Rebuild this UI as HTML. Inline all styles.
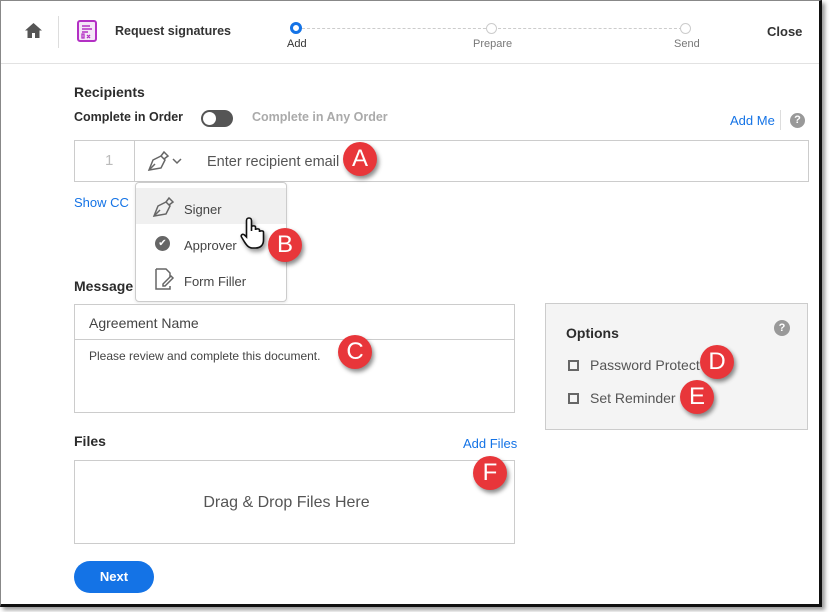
<!DOCTYPE html>
<html><head><style>
*{box-sizing:border-box;margin:0;padding:0}
body{width:830px;height:612px;background:#fff;font-family:"Liberation Sans",sans-serif;position:relative;overflow:hidden;color:#2c2c2c}
.frame{position:absolute;left:0;top:0;width:822px;height:607px;border:1px solid #888;border-right:3px solid #111;border-bottom:3px solid #111;box-shadow:3px 3px 4px #999;background:#fff}
.a{position:absolute}
.b{font-weight:bold}
.badge{position:absolute;width:34px;height:34px;border-radius:50%;background:#e8363a;color:#fff;font-size:24px;text-align:center;line-height:34px;box-shadow:2px 3px 4px rgba(0,0,0,.45)}
.link{color:#1473e6;font-size:13px}
.cb{position:absolute;width:11px;height:11px;border:2px solid #666}
</style></head><body>
<div class="frame"></div>
<svg class="a" style="left:25px;top:23px" width="17" height="15" viewBox="0 0 17 15"><path d="M8.5 0L0 7.5h2.5V15h4.5v-5h3v5h4.5V7.5H17z" fill="#555"/></svg>
<div class="a" style="left:58px;top:16px;width:1px;height:32px;background:#ddd"></div>
<svg class="a" style="left:77px;top:20px" width="20" height="22" viewBox="0 0 20 22"><rect x="1" y="1" width="18" height="20" rx="2" fill="#f4e6f7" stroke="#b330c4" stroke-width="2"/><path d="M5 6h8M5 9h10M5 12h6" stroke="#b330c4" stroke-width="1.5"/><path d="M5 14h2v4H5zM10 15l3 3M13 15l-3 3" stroke="#b330c4" stroke-width="1.3" fill="none"/></svg>
<div class="a b" style="left:115px;top:24px;font-size:12.5px;color:#333">Request signatures</div>
<div class="a" style="left:297px;top:28px;width:390px;border-top:1px dashed #ccc"></div>
<div class="a" style="left:290px;top:22px;width:12px;height:12px;border-radius:50%;border:3px solid #1473e6;background:#fff"></div>
<div class="a" style="left:486px;top:23px;width:11px;height:11px;border-radius:50%;border:1.5px solid #ccc;background:#fff"></div>
<div class="a" style="left:680px;top:23px;width:11px;height:11px;border-radius:50%;border:1.5px solid #ccc;background:#fff"></div>
<div class="a" style="left:287px;top:38px;font-size:11px;color:#333">Add</div>
<div class="a" style="left:473px;top:38px;font-size:11px;color:#777">Prepare</div>
<div class="a" style="left:674px;top:38px;font-size:11px;color:#777">Send</div>
<div class="a b" style="left:767px;top:24px;font-size:13px;color:#333">Close</div>
<div class="a" style="left:1px;top:63px;width:818px;height:1px;background:#e2e2e2"></div>
<div class="a b" style="left:74px;top:84px;font-size:14px">Recipients</div>
<div class="a b" style="left:74px;top:110px;font-size:12.5px">Complete in Order</div>
<div class="a" style="left:201px;top:110px;width:32px;height:17px;border-radius:9px;background:#555"></div>
<div class="a" style="left:203px;top:112px;width:13px;height:13px;border-radius:50%;background:#fff"></div>
<div class="a b" style="left:252px;top:110px;font-size:12.5px;color:#aaa">Complete in Any Order</div>
<div class="a link" style="left:730px;top:113px">Add Me</div>
<div class="a" style="left:780px;top:110px;width:1px;height:20px;background:#ddd"></div>
<div class="a" style="left:790px;top:113px;width:15px;height:15px;border-radius:50%;background:#999;color:#fff;font-size:11px;font-weight:bold;text-align:center;line-height:15px">?</div>
<div class="a" style="left:74px;top:140px;width:735px;height:42px;border:1px solid #ccc"></div>
<div class="a" style="left:134px;top:140px;width:1px;height:42px;background:#ccc"></div>
<div class="a" style="left:105px;top:152px;font-size:15px;color:#bbb">1</div>
<svg class="a" style="left:147px;top:150px" width="36" height="22" viewBox="0 0 36 22"><path d="M2 20l4-10 8-4 4 4-4 8z" fill="none" stroke="#666" stroke-width="1.5"/><path d="M2 20l6-6M14 6l3-4 4 4-4 3" fill="none" stroke="#666" stroke-width="1.5"/><path d="M26 9l4 4 4-4" fill="none" stroke="#666" stroke-width="1.5"/></svg>
<div class="a" style="left:207px;top:154px;font-size:14.5px;color:#555">Enter recipient email</div>
<div class="badge" style="left:343px;top:142px">A</div>
<div class="a link" style="left:74px;top:195px">Show CC</div>
<div class="a" style="left:135px;top:182px;width:152px;height:120px;border:1px solid #ccc;border-radius:4px;background:#fff;box-shadow:0 1px 3px rgba(0,0,0,.1)"></div>
<div class="a" style="left:136px;top:188px;width:150px;height:36px;background:#f0f0f0"></div>
<svg class="a" style="left:152px;top:196px" width="24" height="22" viewBox="0 0 24 22"><path d="M2 20l4-10 8-4 4 4-4 8z" fill="none" stroke="#666" stroke-width="1.5"/><path d="M2 20l6-6M14 6l3-4 4 4-4 3" fill="none" stroke="#666" stroke-width="1.5"/></svg>
<div class="a" style="left:184px;top:202px;font-size:13px;color:#444">Signer</div>
<div class="a" style="left:155px;top:236px;width:15px;height:15px;border-radius:50%;background:#666;color:#fff;font-size:10px;text-align:center;line-height:15px">✔</div>
<div class="a" style="left:184px;top:238px;font-size:13px;color:#444">Approver</div>
<svg class="a" style="left:154px;top:268px" width="22" height="22" viewBox="0 0 22 22"><path d="M2 1h10l4 4v4M16 18v3H2V1" fill="none" stroke="#666" stroke-width="1.5"/><path d="M9 16l8-8 2 2-8 8H9z" fill="none" stroke="#666" stroke-width="1.5"/></svg>
<div class="a" style="left:184px;top:274px;font-size:13px;color:#444">Form Filler</div>
<svg class="a" style="left:240px;top:216px;filter:drop-shadow(2px 3px 2px rgba(0,0,0,.4))" width="28" height="34" viewBox="0 0 28 34"><path d="M9 2c1.5 0 2.5 1 2.5 2.5V15V11c0-1.5 4-1.5 4 0v3c0-1.5 4-1.5 4 0v2c0-1.5 4-1.5 4 0v8c0 5-3 8-8 8h-3c-4 0-6-3-8-6l-3-5c-1-2 1-3.5 3-2l2 2V4.5C6.5 3 7.5 2 9 2z" fill="#fff" stroke="#111" stroke-width="1.6"/></svg>
<div class="badge" style="left:268px;top:228px">B</div>
<div class="a b" style="left:74px;top:278px;font-size:14px">Message</div>
<div class="a" style="left:74px;top:304px;width:441px;height:109px;border:1px solid #ccc"></div>
<div class="a" style="left:74px;top:339px;width:441px;height:1px;background:#ccc"></div>
<div class="a" style="left:89px;top:315px;font-size:14px;color:#444">Agreement Name</div>
<div class="a" style="left:89px;top:349px;font-size:12px;color:#444">Please review and complete this document.</div>
<div class="badge" style="left:338px;top:335px">C</div>
<div class="a" style="left:545px;top:303px;width:263px;height:127px;border:1px solid #ccc;background:#f4f4f4"></div>
<div class="a b" style="left:566px;top:325px;font-size:14px">Options</div>
<div class="a" style="left:774px;top:320px;width:16px;height:16px;border-radius:50%;background:#999;color:#fff;font-size:11px;font-weight:bold;text-align:center;line-height:16px">?</div>
<div class="cb" style="left:568px;top:360px"></div>
<div class="a" style="left:590px;top:357px;font-size:14px;color:#555">Password Protect</div>
<div class="cb" style="left:568px;top:393px"></div>
<div class="a" style="left:590px;top:390px;font-size:14px;color:#555">Set Reminder</div>
<div class="badge" style="left:700px;top:345px">D</div>
<div class="badge" style="left:680px;top:380px">E</div>
<div class="a b" style="left:74px;top:433px;font-size:14px">Files</div>
<div class="a link" style="left:463px;top:436px">Add Files</div>
<div class="a" style="left:74px;top:460px;width:441px;height:84px;border:1px solid #ccc"></div>
<div class="a" style="left:74px;top:494px;width:425px;text-align:center;font-size:16px;color:#555">Drag &amp; Drop Files Here</div>
<div class="badge" style="left:473px;top:456px">F</div>
<div class="a b" style="left:74px;top:561px;width:80px;height:32px;border-radius:16px;background:#1473e6;color:#fff;font-size:13px;text-align:center;line-height:32px">Next</div>
</body></html>
